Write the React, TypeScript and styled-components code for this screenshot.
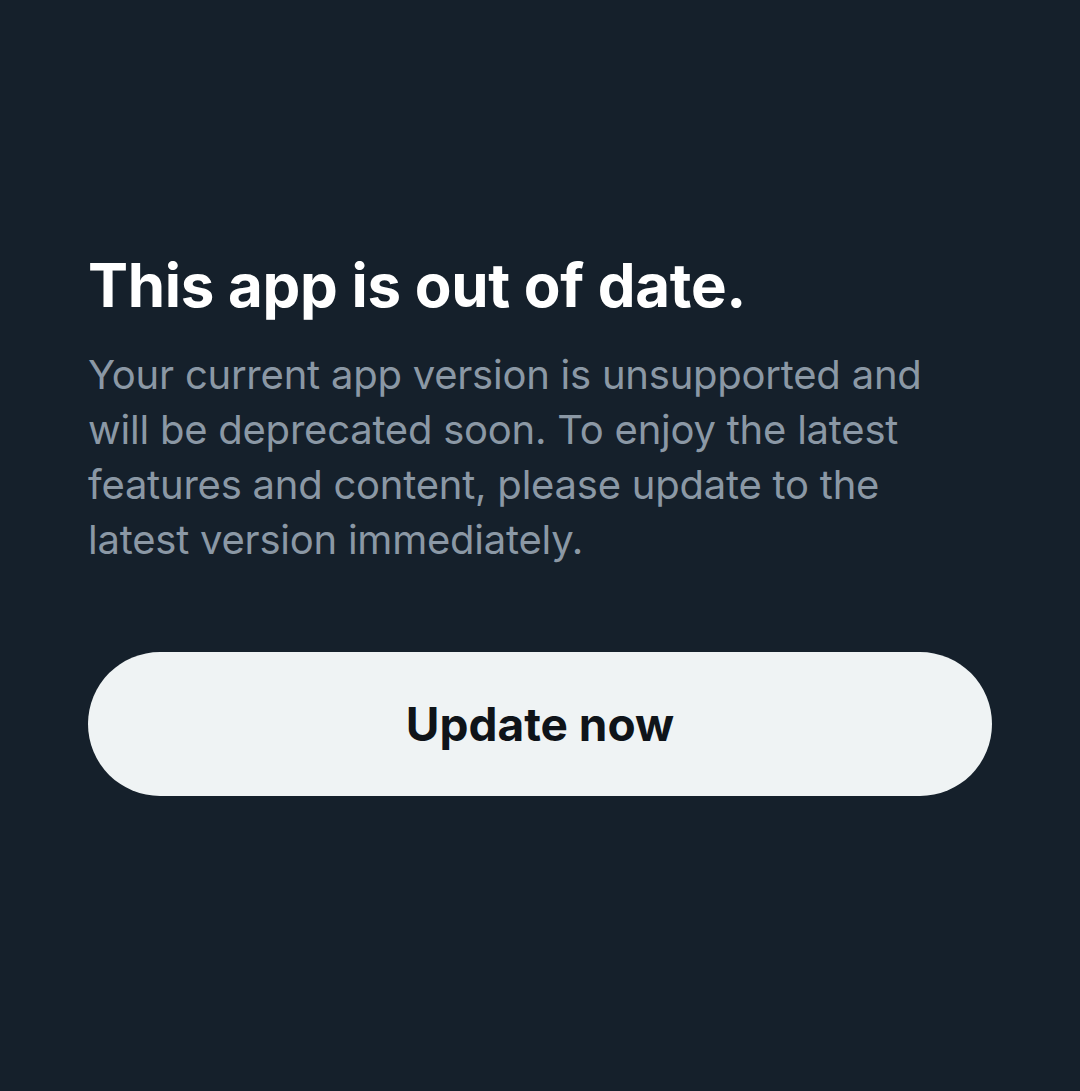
import React, { FC } from "react"
import styled, { createGlobalStyle } from "styled-components"


const GlobalStyle = createGlobalStyle`

html, body {
   margin: 0;
   padding: 0;
   background: #15202b;
}

* {
   box-sizing: border-box;
}

`

const StyledScreen = styled.div`

width: 100%;
min-height: 100vh;
background: #15202b;
display: flex;
flex-direction: column;
justify-content: center;
padding: 0 88px 47px;
font-family: Inter, "Noto Sans", sans-serif;

`

const StyledTitle = styled.h1`

margin: 0;
color: #ffffff;
font-size: 60px;
font-weight: 700;
line-height: 72px;
letter-spacing: -0.3px;

`

const StyledText = styled.p`

margin: 26px 0 0;
max-width: 860px;
color: #8b98a5;
font-size: 40px;
font-weight: 400;
line-height: 55px;
letter-spacing: -0.23px;

`

const StyledButton = styled.button`

margin-top: 85px;
width: 100%;
height: 144px;
border: none;
border-radius: 72px;
background: #eff3f4;
color: #0f1419;
font-family: inherit;
font-size: 46px;
font-weight: 700;
cursor: pointer;

`

interface UpdateNoticeProps {
   title: string
   text: string
   action: string
}

const UpdateNotice: FC<UpdateNoticeProps> = (props) => {
   return (
      <StyledScreen>
         <StyledTitle>{props.title}</StyledTitle>
         <StyledText>{props.text}</StyledText>
         <StyledButton>{props.action}</StyledButton>
      </StyledScreen>
   )
}

const App: FC = () => {
   return (
      <>
         <GlobalStyle />
         <UpdateNotice
            title="This app is out of date."
            text="Your current app version is unsupported and will be deprecated soon. To enjoy the latest features and content, please update to the latest version immediately."
            action="Update now"
         />
      </>
   )
}

export default App
